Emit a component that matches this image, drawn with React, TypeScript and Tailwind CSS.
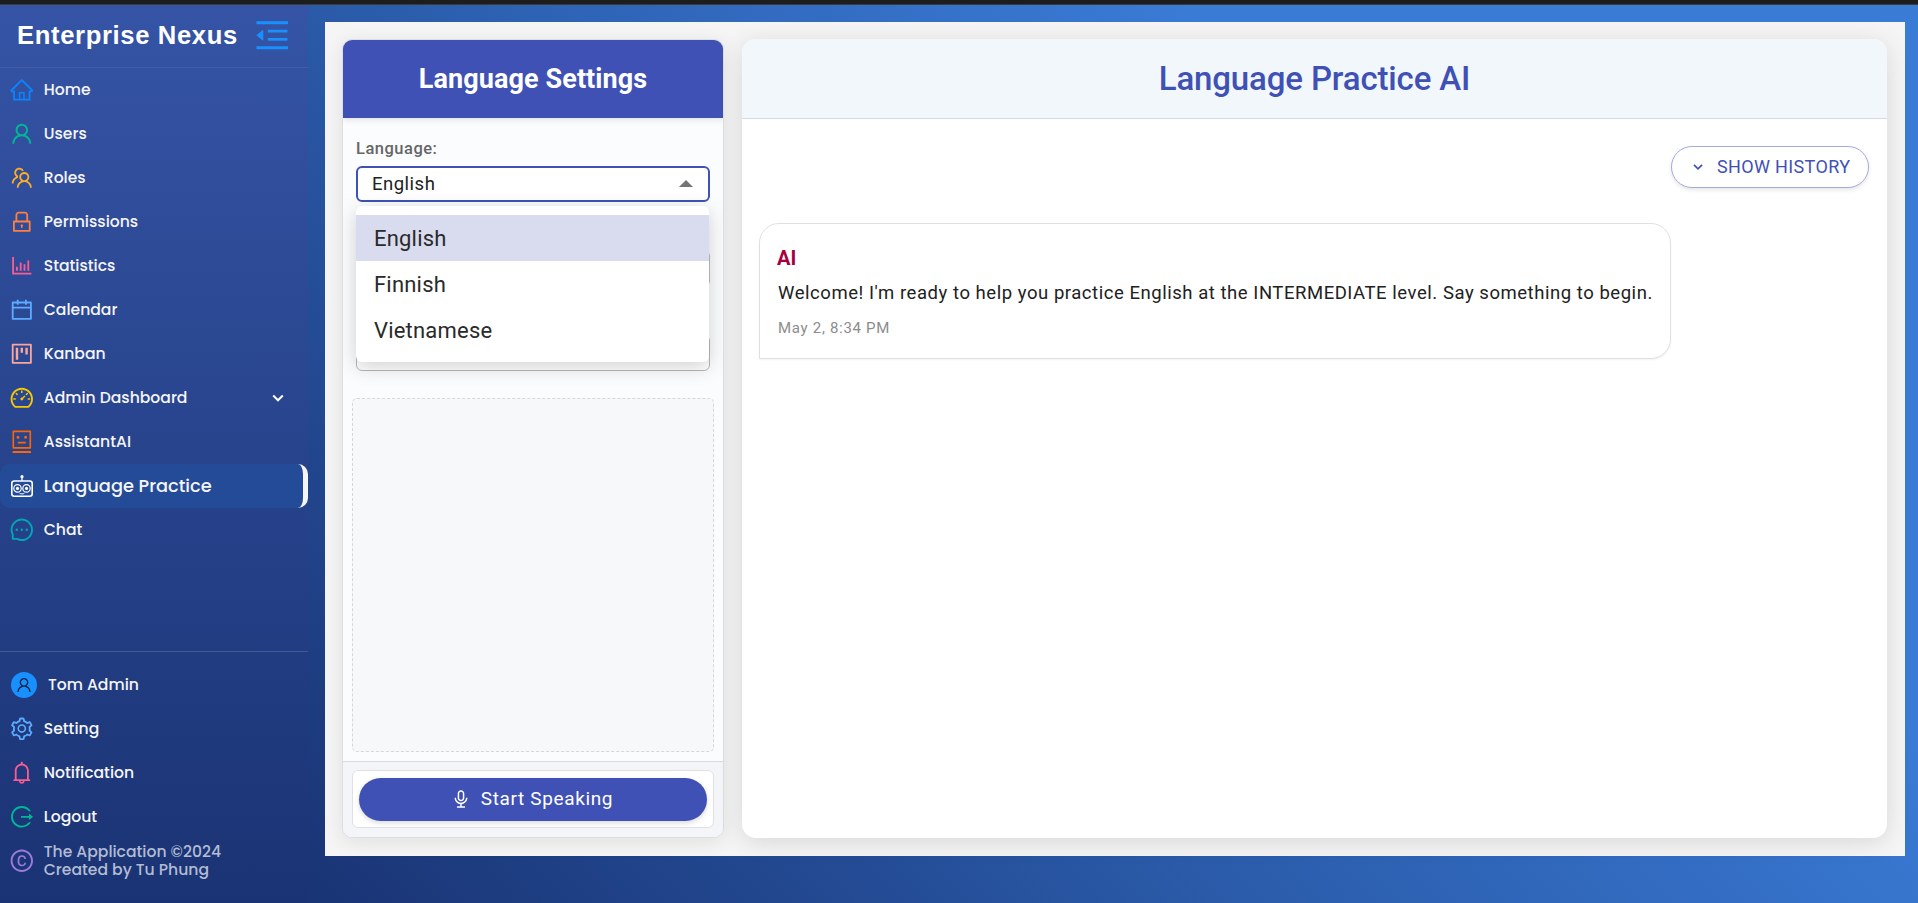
import {
  AiOutlineHome, AiOutlineUser, AiOutlineTeam, AiOutlineLock, AiOutlineBarChart, AiOutlineCalendar,
  AiOutlineProject, AiOutlineDashboard, AiOutlineRobot, AiOutlineMessage, AiOutlineSetting, AiOutlineBell,
  AiOutlineLogout, AiOutlineCopyright, AiOutlineMenuFold, AiOutlineAudio,
} from "react-icons/ai";
import type { ReactNode } from "react";

const ICON = 25.6;

function PracticeBot() {
  return (
    <svg viewBox="0 0 22 22" className="ml-[1.8px] size-[22px]" fill="none" stroke="currentColor">
      <circle cx="11" cy="1.7" r="1.6" fill="currentColor" stroke="none" />
      <path d="M11 2v4" strokeWidth="1.3" />
      <rect x="0.8" y="6" width="20.4" height="15.2" rx="2.4" strokeWidth="1.6" />
      <circle cx="6.5" cy="13.4" r="3.7" strokeWidth="1.2" />
      <circle cx="15.5" cy="13.4" r="3.7" strokeWidth="1.2" />
      <circle cx="6.5" cy="13.4" r="1.6" fill="currentColor" stroke="none" />
      <circle cx="15.5" cy="13.4" r="1.6" fill="currentColor" stroke="none" />
      <path d="M8.6 18.2c1.4 1 3.4 1 4.8 0" strokeWidth="1" />
    </svg>
  );
}

type Item = { label: string; icon: ReactNode; color: string; active?: boolean };

const items: Item[] = [
  { label: "Home", icon: <AiOutlineHome size={ICON} />, color: "text-[#0a84ff]" },
  { label: "Users", icon: <AiOutlineUser size={ICON} />, color: "text-[#00b894]" },
  { label: "Roles", icon: <AiOutlineTeam size={ICON} />, color: "text-[#fdae25]" },
  { label: "Permissions", icon: <AiOutlineLock size={ICON} />, color: "text-[#ff7f3f]" },
  { label: "Statistics", icon: <AiOutlineBarChart size={ICON} />, color: "text-[#fd5c93]" },
  { label: "Calendar", icon: <AiOutlineCalendar size={ICON} />, color: "text-[#5dabff]" },
  { label: "Kanban", icon: <AiOutlineProject size={ICON} />, color: "text-[#fba59b]" },
  { label: "Admin Dashboard", icon: <AiOutlineDashboard size={ICON} />, color: "text-[#f5c800]" },
  { label: "AssistantAI", icon: <AiOutlineRobot size={ICON} />, color: "text-[#ff6600]" },
  { label: "Language Practice", icon: <PracticeBot />, color: "text-white", active: true },
  { label: "Chat", icon: <AiOutlineMessage size={ICON} />, color: "text-[#00a8b5]" },
];

const footer: Item[] = [
  { label: "Setting", icon: <AiOutlineSetting size={ICON} />, color: "text-[#5dabff]" },
  { label: "Notification", icon: <AiOutlineBell size={ICON} />, color: "text-[#fd5c93]" },
  { label: "Logout", icon: <AiOutlineLogout size={ICON} />, color: "text-[#00b894]" },
];

function Chevron({ className }: { className: string }) {
  return (
    <svg viewBox="0 0 12 12" className={className} fill="none" stroke="currentColor" strokeWidth="2">
      <path d="M1.2 3.5 6 8.3l4.8-4.8" />
    </svg>
  );
}

function Row({ label, icon, color, active, children }: Item & { children?: ReactNode }) {
  return (
    <div className={`flex h-11 items-center pl-[9.2px] ${active ? "rounded-[10px] border-r-[5px] border-[#f5f5f5] bg-[#244b98]" : ""}`}>
      <span className={`w-[34.6px] shrink-0 ${color}`}>{icon}</span>
      <span className={`whitespace-nowrap font-medium ${active ? "text-[17.8px] text-[#f5f5f5]" : "text-[15.6px] text-[#f5f5f5]"}`}>{label}</span>
      {children}
    </div>
  );
}

export default function App() {
  return (
    <div className="flex h-[903px] w-[1918px] flex-col overflow-hidden bg-[#1d1d1d] font-[Roboto,sans-serif]">
      <div className="h-[5px] shrink-0 border-b border-[#3a3a3a] bg-[#1d1d1d]" />
      <div className="flex min-h-0 flex-1 bg-[linear-gradient(45deg,#18306f_0%,#1a3576_12%,#22478f_28%,#2a5aa8_43%,#326bc0_59%,#3a7bd5_74%)]">
        <aside className="flex w-[308px] shrink-0 flex-col bg-[linear-gradient(180deg,#3554a5_0%,#1a3374_100%)] font-[Poppins,Inter,sans-serif]">
          <div className="flex h-[63px] shrink-0 items-center border-b border-white/[0.07] pl-[17px]">
            <span className="w-[235px] -translate-y-px whitespace-nowrap font-['Liberation_Sans',sans-serif] text-[25.6px] font-bold tracking-[0.65px] text-white">Enterprise Nexus</span>
            <AiOutlineMenuFold size={40.5} className="-translate-y-px text-[#1890ff]" />
          </div>
          <nav className="flex flex-col">
            {items.map((it) => (
              <Row key={it.label} {...it}>
                {it.label === "Admin Dashboard" && <Chevron className="mr-[24px] ml-auto size-[12px] text-white" />}
              </Row>
            ))}
          </nav>
          <div className="mt-auto border-t border-white/15 pt-[11px] pb-[20px]">
            <div className="flex h-11 items-center pl-[11px]">
              <span className="mr-[11px] flex size-[26px] items-center justify-center rounded-full bg-[#1890ff] text-[#10223d]"><AiOutlineUser size={18} /></span>
              <span className="text-[15.6px] font-medium text-[#f5f5f5]">Tom Admin</span>
            </div>
            {footer.map((it) => <Row key={it.label} {...it} />)}
            <div className="flex h-11 items-center pl-[9.2px]">
              <span className="w-[34.6px] shrink-0 text-[#9b7bdc]"><AiOutlineCopyright size={ICON} /></span>
              <span className="text-[15.6px] leading-[18px] font-medium text-[#b4bcd4]">The Application ©2024<br />Created by Tu Phung</span>
            </div>
          </div>
        </aside>
        <main className="mt-[17px] ml-[17px] flex h-[834px] w-[1580px] gap-[18px] bg-[#f5f5f5] pt-[17px] pl-[17px]">
          <section className="flex h-[799px] w-[382px] flex-col overflow-hidden rounded-[10px] border border-[#dcdee0] bg-[#fafcfe] shadow-[0_4px_20px_rgba(0,0,0,0.09)]">
            <div className="flex h-[78px] shrink-0 items-center justify-center bg-[#3f51b5] pt-px shadow-[0_2px_6px_rgba(0,0,0,0.1)]">
              <h2 className="text-[27px] font-bold tracking-[0.1px] text-white">Language Settings</h2>
            </div>
            <div className="relative flex flex-col px-[13px] pt-[19px]">
              <label className="text-[16.5px] leading-[24px] font-medium tracking-[0.5px] text-[#666]">Language:</label>
              <div className="mt-[5px] flex h-[36px] items-center justify-between rounded-[6px] border-2 border-[#3f51b5] bg-white pt-[2px] pr-[15px] pl-[14px] text-[18.5px] tracking-[0.5px] text-[#212121]">
                English
                <svg viewBox="0 0 14 7" className="mb-[3px] h-[7px] w-[14px] fill-[#757575]"><path d="M0 7 7 0l7 7z" /></svg>
              </div>
              <div className="mt-[48px] h-[37px] rounded-[6px] border border-[#c0c0c0] bg-white" />
              <div className="mt-[48px] h-[36px] rounded-[6px] border border-[#b8b8b8] bg-white" />
              <ul className="absolute top-[88px] left-[13px] h-[156px] w-[353px] rounded-[6px] bg-white pt-[9px] text-[22px] tracking-[0.2px] text-[#2a2a2a] shadow-[0_5px_20px_rgba(0,0,0,0.18)]">
                <li className="flex h-[46px] items-center bg-[#d9dbef] pl-[18px]">English</li>
                <li className="flex h-[46px] items-center pl-[18px]">Finnish</li>
                <li className="flex h-[46px] items-center pl-[18px]">Vietnamese</li>
              </ul>
            </div>
            <div className="mx-[9px] mt-[27px] h-[354px] rounded-[5px] border border-dashed border-[#d5d7da] bg-[#f7f8fa]" />
            <div className="mt-[9px] flex-1 border-t border-[#d8dadd] bg-[#f4f5f8] px-[9px] pt-[8px]">
              <div className="h-[58px] rounded-[6px] border border-[#e0e0e2] bg-white px-[6px] pt-[7px]">
                <button className="flex h-[43px] w-full items-center justify-center rounded-full bg-[#3f51b5] pr-[2px] pb-px text-[19px] tracking-[0.63px] text-white shadow-[0_2px_5px_rgba(0,0,0,0.15)]">
                  <AiOutlineAudio size={20} className="mr-[10px]" />Start Speaking
                </button>
              </div>
            </div>
          </section>
          <section className="flex h-[799px] w-[1145px] flex-col overflow-hidden rounded-[14px] bg-white shadow-[0_4px_24px_rgba(0,0,0,0.12)]">
            <div className="flex h-[80px] shrink-0 items-center justify-center border-b border-[#d5dbe1] bg-[#f2f7fc] pt-px">
              <h1 className="text-[33px] font-medium tracking-[-0.14px] text-[#3f51b5]">Language Practice AI</h1>
            </div>
            <div className="flex justify-end pt-[27px] pr-[18px]">
              <button className="flex h-[42px] w-[198px] items-center rounded-full border border-[#a3abdc] bg-white pb-px pl-[21px] text-[18px] tracking-[0.35px] text-[#3f51b5] shadow-[0_2px_4px_rgba(0,0,0,0.1)]">
                <Chevron className="mr-[14px] size-[10px]" />SHOW HISTORY
              </button>
            </div>
            <div className="mt-[35px] ml-[17px] h-[136px] w-[912px] rounded-[20px] rounded-bl-none border border-[#e0e0e0] bg-white pt-[22px] pl-[18px] shadow-[0_1px_2px_rgba(0,0,0,0.05)]">
              <div className="-ml-px text-[20px] leading-[24px] font-bold text-[#a8003f]">AI</div>
              <p className="mt-[10px] text-[18.5px] leading-[26px] tracking-[0.54px] whitespace-nowrap text-[#212121]">Welcome! I'm ready to help you practice English at the INTERMEDIATE level. Say something to begin.</p>
              <div className="mt-[12px] text-[15px] leading-[20px] tracking-[0.7px] text-[#8c8c8c]">May 2, 8:34 PM</div>
            </div>
          </section>
        </main>
      </div>
    </div>
  );
}
